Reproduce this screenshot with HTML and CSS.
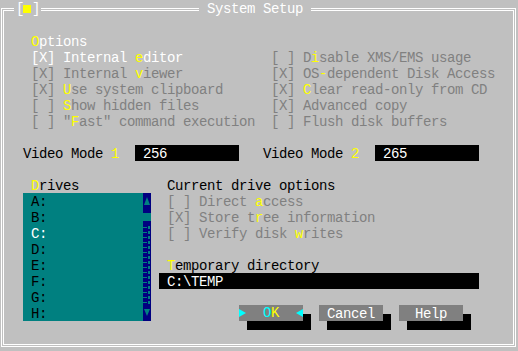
FILE: index.html
```html
<!DOCTYPE html>
<html lang="en">
  <head>
    <meta charset="UTF-8" />
    <title>System Setup</title>
    <link rel="stylesheet" href="styles.css">
  </head>
  <body>
    <div class="frame">
      <!-- window caption on the top border -->
      <div class="sysmenu">[<i class="sq"></i>]</div>
      <div class="title">System Setup</div>

      <div class="frame-in">
        <div class="row on pad"><span class="hk">O</span>ptions</div>
        <div class="opts">
          <div class="row on">[X] Internal <span class="hk">e</span>ditor</div>
          <div class="row dim">[ ] D<span class="hk">i</span>sable XMS/EMS usage</div>
          <div class="row dim">[X] Internal <span class="hk">v</span>iewer</div>
          <div class="row dim">[X] OS<span class="hk">-</span>dependent Disk Access</div>
          <div class="row dim">[X] <span class="hk">U</span>se system clipboard</div>
          <div class="row dim">[X] <span class="hk">C</span>lear read-only from CD</div>
          <div class="row dim">[ ] <span class="hk">S</span>how hidden files</div>
          <div class="row dim">[X] Advanced copy</div>
          <div class="row dim">[ ] "<span class="hk">F</span>ast" command execution</div>
          <div class="row dim">[ ] Flush disk buffers</div>
        </div>

        <div class="blank"></div>
        <div class="video">
          <div class="lbl">Video Mode <span class="hk">1</span></div>
          <div class="field">256</div>
          <div class="lbl lbl2">Video Mode <span class="hk">2</span></div>
          <div class="field">265</div>
        </div>
        <div class="blank"></div>

        <div class="lower">
          <div class="drives">
            <div class="row pad"><span class="hk">D</span>rives</div>
            <div class="list">
              <div class="items">
                <div class="row">A:</div>
                <div class="row">B:</div>
                <div class="row cur">C:</div>
                <div class="row">D:</div>
                <div class="row">E:</div>
                <div class="row">F:</div>
                <div class="row">G:</div>
                <div class="row">H:</div>
              </div>
              <div class="scroll">
                <div class="sb-cell">
                  <svg width="8" height="8" viewBox="0 0 8 8"><path d="M4 0L7 8H1Z" fill="#008080"/></svg>
                </div>
                <div class="sb-cell"><i class="thumb"></i></div>
                <div class="sb-track"></div>
                <div class="sb-cell">
                  <svg width="8" height="8" viewBox="0 0 8 8"><path d="M1 0H7L4 7Z" fill="#008080"/></svg>
                </div>
              </div>
            </div>
          </div>

          <div class="side">
            <div class="row">Current drive options</div>
            <div class="row dim">[ ] Direct <span class="hk">a</span>ccess</div>
            <div class="row dim">[X] Store t<span class="hk">r</span>ee information</div>
            <div class="row dim">[ ] Verify disk <span class="hk">w</span>rites</div>
            <div class="blank"></div>
            <div class="row"><span class="hk">T</span>emporary directory</div>
            <div class="field temp">C:\TEMP</div>
            <div class="blank"></div>
            <div class="buttons">
              <div class="btn btn-ok"><i class="tri-r"></i><span><span class="cy">O</span><span class="hk">K</span></span><i class="tri-l"></i></div>
              <div class="btn">Cancel</div>
              <div class="btn">Help</div>
            </div>
          </div>
        </div>
      </div>
    </div>
  </body>
</html>
```
FILE: styles.css
```css
body {
  margin: 0;
  width: 518px;
  height: 351px;
  overflow: hidden;
  background: #c0c0c0;
  color: #000;
  font-family: "Liberation Mono", "Courier New", monospace;
  font-size: 14px;
  letter-spacing: -0.4px;
  line-height: 18px;
}
.frame {
  position: relative;
  box-sizing: border-box;
  width: 515px;
  height: 339px;
  margin: 8px 0 0 1px;
  border: 1px solid #fff;
  padding: 1px;
}
.frame-in {
  box-sizing: border-box;
  height: 100%;
  border: 1px solid #fff;
  padding: 22px 0 0 19px;
}
.sysmenu {
  position: absolute;
  left: 12px;
  top: -9px;
  height: 16px;
  padding: 0 1px 0 2px;
  background: #c0c0c0;
  color: #fff;
  white-space: pre;
}
.sq {
  display: inline-block;
  width: 8px;
  height: 8px;
  margin: 0 1px 0 -1px;
  background: #ff0;
  vertical-align: 0;
}
.title {
  position: absolute;
  left: 197px;
  top: -9px;
  height: 16px;
  padding: 0 8px;
  background: #c0c0c0;
  color: #fff;
}
.row {
  height: 16px;
  white-space: pre;
}
.blank {
  height: 16px;
}
.pad {
  padding-left: 8px;
}
.hk {
  color: #ff0;
}
.cy {
  color: #0ff;
}
.on {
  color: #fff;
}
.dim {
  color: #808080;
}
.opts {
  display: grid;
  grid-template-columns: 240px 1fr;
  padding-left: 8px;
}
.video {
  display: flex;
  height: 16px;
}
.video .lbl {
  width: 112px;
  white-space: pre;
}
.video .lbl2 {
  margin-left: 24px;
}
.field {
  box-sizing: border-box;
  width: 104px;
  height: 16px;
  padding-left: 8px;
  background: #000;
  color: #fff;
  white-space: pre;
}
.lower {
  display: flex;
  gap: 8px;
}
.drives {
  width: 128px;
}
.list {
  display: flex;
  height: 128px;
}
.items {
  width: 120px;
  background: #008080;
}
.items .row {
  padding-left: 8px;
}
.items .cur {
  color: #fff;
}
.scroll {
  width: 8px;
  background: #000080;
  display: flex;
  flex-direction: column;
}
.sb-cell {
  height: 16px;
  display: flex;
  align-items: center;
  justify-content: center;
}
.sb-cell svg {
  display: block;
}
.thumb {
  width: 8px;
  height: 8px;
  background: #008080;
}
.sb-track {
  height: 80px;
  background:
    repeating-linear-gradient(to bottom, transparent 0 2px, #008080 2px 3px, transparent 3px 5px) 0 0 / 4px 100% no-repeat,
    repeating-linear-gradient(to bottom, transparent 0 1px, #008080 1px 4px, transparent 4px 5px) 5px 0 / 2px 100% no-repeat;
}
.side {
  width: 320px;
}
.side .row {
  padding-left: 8px;
}
.field.temp {
  width: 320px;
}
.buttons {
  display: flex;
  gap: 16px;
  margin-left: 80px;
}
.btn {
  width: 64px;
  height: 16px;
  background: #808080;
  color: #fff;
  text-align: center;
  box-shadow: 8px 9px 0 #000;
}
.btn-ok {
  display: flex;
  justify-content: space-between;
  align-items: center;
}
.tri-r {
  width: 0;
  height: 0;
  border-left: 7px solid #0ff;
  border-top: 4px solid transparent;
  border-bottom: 4px solid transparent;
}
.tri-l {
  width: 0;
  height: 0;
  border-right: 7px solid #0ff;
  border-top: 4px solid transparent;
  border-bottom: 4px solid transparent;
}
```
